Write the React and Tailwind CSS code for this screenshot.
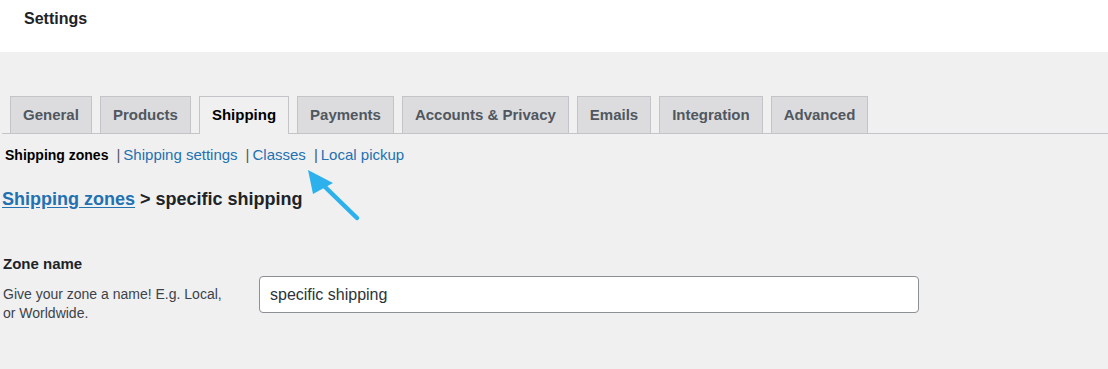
const tabs = [
  'General',
  'Products',
  'Shipping',
  'Payments',
  'Accounts & Privacy',
  'Emails',
  'Integration',
  'Advanced',
];

const ShippingZoneSettings = () => {
  return (
    <div className="relative min-h-screen bg-[#f0f0f1] font-['Liberation_Sans',Arial,sans-serif] text-[#1d2327]">
      {/* top bar */}
      <div className="h-[52px] bg-white pl-6 pt-[10px]">
        <h1 className="text-[16px] font-semibold leading-[18px] text-[#1d2327]">Settings</h1>
      </div>

      {/* tabs */}
      <nav className="ml-[2px] mt-[44px] flex items-end gap-[8px] border-b border-[#c3c4c7] pl-[8px]">
        {tabs.map((tab) => (
          <a
            key={tab}
            href="#"
            className={
              tab === 'Shipping'
                ? '-mb-px flex h-[38px] items-center border border-b-0 border-[#c3c4c7] bg-[#f0f0f1] px-[12px] text-[15px] font-semibold text-black'
                : 'flex h-[37px] items-center border border-b-0 border-[#c3c4c7] bg-[#dcdcde] px-[12px] text-[15px] font-semibold text-[#50575e]'
            }
          >
            {tab}
          </a>
        ))}
      </nav>

      {/* sub links */}
      <ul className="ml-[5px] mt-[11px] flex items-center text-[15px] leading-[20px]">
        <li className="text-[14px] font-semibold text-black">Shipping zones</li>
        <li className="ml-[8px] text-[#50575e]">|</li>
        <li className="ml-[3px] text-[#2271b1]">Shipping settings</li>
        <li className="ml-[8px] text-[#50575e]">|</li>
        <li className="ml-[3px] text-[#2271b1]">Classes</li>
        <li className="ml-[8px] text-[#50575e]">|</li>
        <li className="ml-[3px] text-[#2271b1]">Local pickup</li>
      </ul>

      {/* heading */}
      <h2 className="ml-[2px] mt-[22px] text-[18px] font-semibold leading-[24px] text-[#1d2327]">
        <a href="#" className="text-[#2271b1] underline underline-offset-2">Shipping zones</a>
        {' > specific shipping'}
      </h2>

      {/* zone name row */}
      <div className="mt-[43px] flex pl-[3px]">
        <div className="w-[256px]">
          <label className="block text-[15px] font-semibold leading-[20px]">Zone name</label>
          <p className="mt-[11px] w-[225px] text-[14px] leading-[19px] text-[#3c434a]">
            Give your zone a name! E.g. Local, or Worldwide.
          </p>
        </div>
        <input
          type="text"
          defaultValue="specific shipping"
          className="mt-[22px] h-[37px] w-[660px] rounded-[4px] border border-[#8c8f94] bg-white px-[10px] text-[16px] text-[#2c3338] outline-none"
        />
      </div>

      {/* annotation arrow */}
      <svg className="absolute left-[300px] top-[162px]" width="70" height="66" viewBox="300 162 70 66">
        <line x1="357" y1="218" x2="322" y2="184" stroke="#2db1ec" strokeWidth="4.5" strokeLinecap="round" />
        <polygon points="308,170 313,194 333,183" fill="#2db1ec" />
      </svg>
    </div>
  );
};

export default function App() {
  return <ShippingZoneSettings />;
}
